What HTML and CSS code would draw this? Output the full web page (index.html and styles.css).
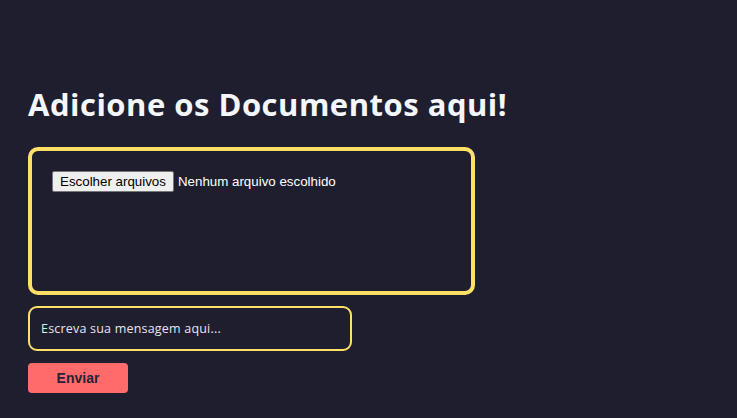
FILE: index.html
```html
<!DOCTYPE html>
<html lang="pt-BR">
<head>
<meta charset="utf-8">
<title>Documentos</title>
<link rel="stylesheet" href="styles.css">
</head>
<body>
<main class="page">
  <h1 class="title">Adicione os Documentos aqui!</h1>
  <form class="upload-form">
    <div class="dropzone">
      <label class="file-picker">
        <input type="file" class="file-input" multiple>
        <span class="file-button">Escolher arquivos</span>
        <span class="file-status">Nenhum arquivo escolhido</span>
      </label>
    </div>
    <input type="text" class="message" placeholder="Escreva sua mensagem aqui...">
    <button type="button" class="send">Enviar</button>
  </form>
</main>
</body>
</html>
```
FILE: styles.css
```css
html, body {
  margin: 0;
  padding: 0;
  background: #1f1e2e;
  height: 100%;
}
.page {
  padding: 85px 28px 0;
  font-family: "Open Sans", sans-serif;
}
.title {
  margin: 0 0 24px;
  color: #f3f6fb;
  font-family: "Open Sans", sans-serif;
  font-weight: 700;
  font-size: 31px;
  line-height: 38px;
  letter-spacing: 0.5px;
}
.upload-form {
  display: flex;
  flex-direction: column;
  align-items: flex-start;
}
.dropzone {
  box-sizing: border-box;
  width: 447px;
  height: 148px;
  border: 4px solid #ffe066;
  border-radius: 10px;
  padding: 20px;
}
.file-picker {
  display: flex;
  align-items: center;
  gap: 4px;
  font-family: "Liberation Sans", Arial, sans-serif;
  font-size: 13.33px;
  cursor: pointer;
}
.file-input {
  display: none;
}
.file-button {
  box-sizing: border-box;
  height: 21px;
  padding: 1px 7px;
  background: #efefef;
  color: #000;
  border: 1px solid #767676;
  border-radius: 2px;
  line-height: 17px;
}
.file-status {
  color: #ffffff;
}
.message {
  box-sizing: border-box;
  margin-top: 11px;
  width: 324px;
  height: 45px;
  padding: 0 11px;
  background: transparent;
  border: 2px solid #ffe066;
  border-radius: 9px;
  color: #e6e6ee;
  font-family: "Open Sans", sans-serif;
  font-size: 12.5px;
  letter-spacing: 0.2px;
  outline: none;
}
.message::placeholder {
  color: #e6e6ee;
  opacity: 1;
}
.send {
  margin-top: 12px;
  width: 100px;
  height: 30px;
  background: #ff6b6b;
  color: #25233a;
  border: none;
  border-radius: 4px;
  font-family: "Liberation Sans", Arial, sans-serif;
  font-weight: 700;
  font-size: 14px;
  cursor: pointer;
}
```
